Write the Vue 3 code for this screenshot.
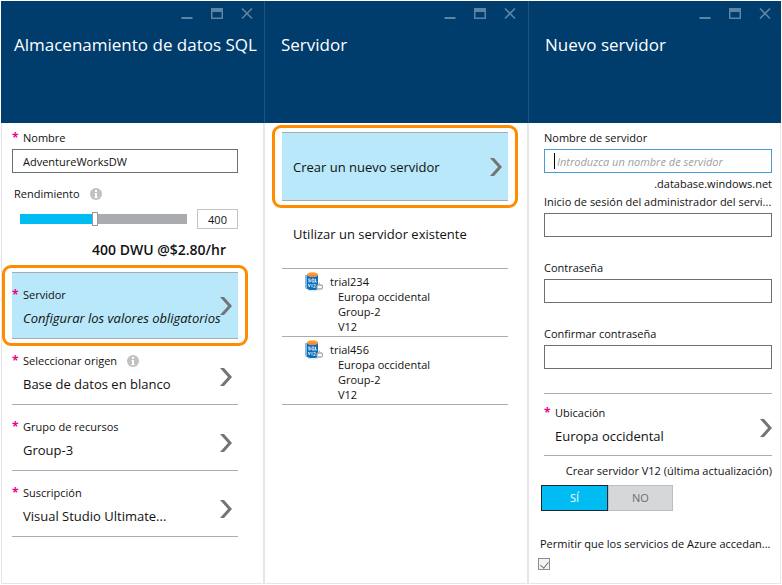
<script setup>
import { ref, computed } from 'vue'

const name = ref('AdventureWorksDW')
const dwu = ref(400)
const maxDwu = 900
const fill = computed(() => ({ '--fill': (dwu.value / maxDwu) * 100 + '%' }))
const serverName = ref('')
const login = ref('')
const password = ref('')
const confirm = ref('')
const v12 = ref(true)
const allowAzure = ref(true)

const settings = [
  { label: 'Servidor', value: 'Configurar los valores obligatorios', active: true },
  { label: 'Seleccionar origen', value: 'Base de datos en blanco', info: true },
  { label: 'Grupo de recursos', value: 'Group-3' },
  { label: 'Suscripción', value: 'Visual Studio Ultimate...' },
]
const servers = ['trial234', 'trial456']
const blades = ['Almacenamiento de datos SQL', 'Servidor', 'Nuevo servidor']
</script>

<template>
  <main class="portal">
    <section v-for="(title, i) in blades" :key="title" class="blade" :class="'blade-' + (i + 1)">
      <header class="head">
        <div class="window-controls">
          <button type="button" aria-label="Minimizar">
            <svg viewBox="0 0 12 12"><path d="M0.500 10h11" fill="none" stroke="currentColor" stroke-width="2" /></svg>
          </button>
          <button type="button" aria-label="Maximizar">
            <svg viewBox="0 0 12 12"><path fill-rule="evenodd" d="M0 0h12v11H0zM1.500 4v5.500h9V4z" fill="currentColor" /></svg>
          </button>
          <button type="button" aria-label="Cerrar">
            <svg viewBox="0 0 12 12"><path d="M1 .5l10 10M11 .5l-10 10" fill="none" stroke="currentColor" stroke-width="1.600" /></svg>
          </button>
        </div>
        <h1>{{ title }}</h1>
      </header>

      <div v-if="i === 0" class="body">
        <label class="field-label required" for="name">Nombre</label>
        <input id="name" v-model="name" class="text-box" type="text" />
        <div class="perf-label">
          <label for="perf">Rendimiento</label>
          <svg class="info" viewBox="0 0 12 12"><circle cx="6" cy="6" r="6" fill="#bfc1c2" /><path d="M5 2h2v2H5zM4.500 5H7v4h.5v1h-3V9H5V6h-.5z" fill="#fff" /></svg>
        </div>
        <div class="perf">
          <input id="perf" v-model.number="dwu" class="slider" type="range" min="0" :max="maxDwu" step="100" :style="fill" />
          <input v-model.number="dwu" class="amount" type="text" aria-label="DWU" />
        </div>
        <p class="price">{{ dwu }} DWU @$2.80/hr</p>
        <button v-for="s in settings" :key="s.label" type="button" class="row" :class="{ active: s.active }">
          <span class="row-text">
            <span class="row-label required">{{ s.label }}
              <svg v-if="s.info" class="info" viewBox="0 0 12 12"><circle cx="6" cy="6" r="6" fill="#bfc1c2" /><path d="M5 2h2v2H5zM4.500 5H7v4h.5v1h-3V9H5V6h-.5z" fill="#fff" /></svg>
            </span>
            <span class="row-value">{{ s.value }}</span>
          </span>
          <svg class="chevron" viewBox="0 0 12 18"><path d="M0 0h4l8 9-8 9H0l8-9z" fill="#727476" /></svg>
        </button>
      </div>

      <div v-else-if="i === 1" class="body">
        <button type="button" class="row active create">
          <span class="row-value">Crear un nuevo servidor</span>
          <svg class="chevron" viewBox="0 0 12 18"><path d="M0 0h4l8 9-8 9H0l8-9z" fill="#727476" /></svg>
        </button>
        <h2>Utilizar un servidor existente</h2>
        <ul class="servers">
          <li v-for="s in servers" :key="s">
            <svg class="db" viewBox="0 0 20 20">
              <path d="M1 3h5v14H2L1 15z" fill="#86b9df" />
              <path d="M3 2.500v14c0 2 11 2 11 0v-14z" fill="#0b6db8" />
              <path d="M4 17.500c2 1.500 8 1.500 10 0v1c-2 1.200-8 1.200-10 0z" fill="#c9dff0" />
              <ellipse cx="8.500" cy="2.700" rx="5.500" ry="2.400" fill="#ff9b24" />
              <ellipse cx="8.500" cy="3.800" rx="3.500" ry="1" fill="#ff7a5c" />
              <path d="M6.500 7H4.700v1.400h1.600v1.500H4.300M8 7h2v3H8zM9.400 9.500l1 1M11.500 6.800V10H13M4.300 12l1 3 1-3M8 12v3.300M9.500 12.400h1.700v1.200l-1.700 1.700h2" fill="none" stroke="#d8edfb" stroke-width=".9" />
              <rect x="13" y="13" width="5.500" height="4" rx="1.500" fill="#fff" stroke="#a9abad" stroke-width="1.300" />
              <path d="M14.500 12.500q0-1.500 1.500-1.500" fill="none" stroke="#a9abad" />
            </svg>
            <div>
              <strong>{{ s }}</strong>
              <p>Europa occidental</p>
              <p>Group-2</p>
              <p>V12</p>
            </div>
          </li>
        </ul>
      </div>

      <form v-else class="body" @submit.prevent>
        <label class="field-label" for="server">Nombre de servidor</label>
        <div class="focused">
          <input id="server" v-model="serverName" class="text-box" type="text" placeholder="Introduzca un nombre de servidor" />
        </div>
        <p class="suffix">.database.windows.net</p>
        <label class="field-label login" for="login">Inicio de sesión del administrador del servi...</label>
        <input id="login" v-model="login" class="text-box" type="text" />
        <label class="field-label spaced" for="pw">Contraseña</label>
        <input id="pw" v-model="password" class="text-box" type="password" />
        <label class="field-label spaced" for="pw2">Confirmar contraseña</label>
        <input id="pw2" v-model="confirm" class="text-box" type="password" />
        <button type="button" class="row location">
          <span class="row-text">
            <span class="row-label required">Ubicación</span>
            <span class="row-value">Europa occidental</span>
          </span>
          <svg class="chevron" viewBox="0 0 12 18"><path d="M0 0h4l8 9-8 9H0l8-9z" fill="#727476" /></svg>
        </button>
        <p id="v12" class="v12-label">Crear servidor V12 (última actualización)</p>
        <div class="toggle" role="group" aria-labelledby="v12">
          <button type="button" :class="{ on: v12 }" :aria-pressed="v12" @click="v12 = true">SÍ</button>
          <button type="button" :class="{ on: !v12 }" :aria-pressed="!v12" @click="v12 = false">NO</button>
        </div>
        <label class="allow" for="allow">Permitir que los servicios de Azure accedan...</label>
        <input id="allow" v-model="allowAzure" class="tick" type="checkbox" />
      </form>
    </section>
  </main>
</template>

<style>
body { margin: 0; background: #fff; }
</style>

<style scoped>
* { box-sizing: border-box; }
.portal {
  display: grid;
  grid-template-columns: 263fr 264fr 253fr;
  padding: 1px;
  min-height: 100vh;
  font: 11px/16px "Segoe UI", "Open Sans", sans-serif;
  color: #111;
  white-space: nowrap;
}
.blade { display: flex; flex-direction: column; min-width: 0; }
h1, h2, p, ul { margin: 0; padding: 0; font-weight: 400; }
button { font: inherit; color: inherit; text-align: left; border: 0; padding: 0; background: none; cursor: pointer; }
input { font: inherit; color: inherit; margin: 0; }
.head {
  height: 122px;
  background: #003c6c;
  color: #fff;
  border-left: 1px solid #1f5480;
  padding: 7px 10px 0 16px;
}
.blade-1 .head { border-left-color: #003c6c; padding: 7px 11px 0 12px; }
.blade-2 .head { padding-right: 12px; }
.window-controls { display: flex; justify-content: flex-end; gap: 18px; color: #5c84a5; }
.window-controls svg { display: block; width: 12px; height: 12px; }
h1 { margin-top: 13px; font-size: 17px; line-height: 24px; }
.body {
  flex: 1;
  display: flex;
  flex-direction: column;
  border: 1px solid #e6e6e6;
  border-top: 0;
  padding: 7px 25px 0 10px;
}
.blade-2 .body { padding: 9px 19px 0 17px; }
.blade-3 .body { padding: 7px 8px 0 15px; }
.required { position: relative; }
.required::before { content: "*"; position: absolute; left: -11px; top: 0; color: #ec008c; font-size: 12px; font-weight: 700; }
.field-label { display: block; }
.blade-1 .field-label { margin-left: 11px; }
.text-box {
  width: 100%;
  height: 24px;
  margin-top: 3px;
  border: 1px solid #6e6f71;
  background: #fff;
  padding: 0 10px;
  outline: 0;
}
.perf-label { display: flex; align-items: center; gap: 10px; margin: 13px 0 0 2px; }
.info { width: 12px; height: 12px; }
.perf { display: flex; align-items: center; gap: 10px; margin: 7px 0 0 8px; }
.slider {
  flex: 1;
  min-width: 0;
  height: 14px;
  appearance: none;
  background: linear-gradient(to right, #00bcf2 var(--fill), #a9abae var(--fill)) center / 100% 10px no-repeat;
}
.slider::-webkit-slider-thumb { appearance: none; width: 6px; height: 14px; background: #fff; border: 1px solid #97999b; }
.amount { width: 41px; height: 20px; border: 1px solid #c3c4c6; text-align: center; padding: 0; }
.price { margin: 11px 12px 12px 0; text-align: right; font-size: 14px; line-height: 20px; font-weight: 600; }
.row {
  position: relative;
  display: flex;
  justify-content: space-between;
  align-items: center;
  height: 66px;
  border-bottom: 1px solid #a9abad;
  padding-right: 6px;
}
.row-text { display: flex; flex-direction: column; gap: 5px; padding: 4px 0 0 11px; }
.row-label { display: flex; align-items: center; gap: 10px; }
.row-value { font-size: 13px; line-height: 20px; }
.chevron { flex: none; width: 12px; height: 18px; margin-top: 11px; }
.active {
  height: 67px;
  border-top: 1px solid #a9abad;
  background: #b8e8f9;
}
.active .row-value { margin-right: -10px; }
.active .row-text .row-value { font-style: italic; }
.active .chevron { margin-top: 0; }
.active::after {
  content: "";
  position: absolute;
  inset: -8px -10px;
  border: 3px solid #ff8c00;
  border-radius: 9px;
}
.create { height: 69px; padding-left: 11px; }
h2 { margin: 23px 0 24px 11px; font-size: 13px; line-height: 20px; }
.servers { list-style: none; border-top: 1px solid #a9abad; }
.servers li { display: flex; gap: 6px; height: 68px; padding: 5px 0 0 22px; line-height: 15px; border-bottom: 1px solid #a9abad; }
.servers strong { font-weight: 400; }
.servers p { margin-left: 8px; }
.db { width: 20px; height: 20px; margin-top: -2px; }
.focused { position: relative; }
.focused::before { content: ""; position: absolute; left: 10px; top: 7px; width: 1px; height: 16px; background: #000; }
.focused .text-box { display: block; border-color: #4a9ad4; padding-left: 12px; }
.text-box::placeholder { color: #9d9fa1; font-style: italic; opacity: 1; }
.suffix { margin-top: 3px; text-align: right; }
.login { margin-top: 2px; }
.spaced { margin-top: 23px; }
.location { height: 63px; margin-top: 24px; border-top: 1px solid #a9abad; padding-right: 0; }
.location .row-text { padding-top: 2px; }
.location .chevron { margin-top: 7px; }
.v12-label { margin-top: 7px; text-align: right; }
.toggle { display: flex; margin: 6px 0 0 -3px; }
.toggle button { width: 65px; height: 26px; border: 1px solid #bcbdbf; background: #d6d7d9; color: #6c6e70; text-align: center; }
.toggle .on { width: 67px; border-color: #1c2a30; background: #00bcf2; color: #fff; }
.allow { margin: 25px 0 0 -4px; }
.tick {
  appearance: none;
  display: grid;
  place-items: center;
  width: 12px;
  height: 12px;
  margin: 6px 0 0 -6px;
  border: 1px solid #8c8e90;
  background: #f2f2f2;
}
.tick:checked::before { content: ""; width: 4px; height: 7px; border: solid #77797b; border-width: 0 1px 1px 0; transform: rotate(40deg); }
</style>
